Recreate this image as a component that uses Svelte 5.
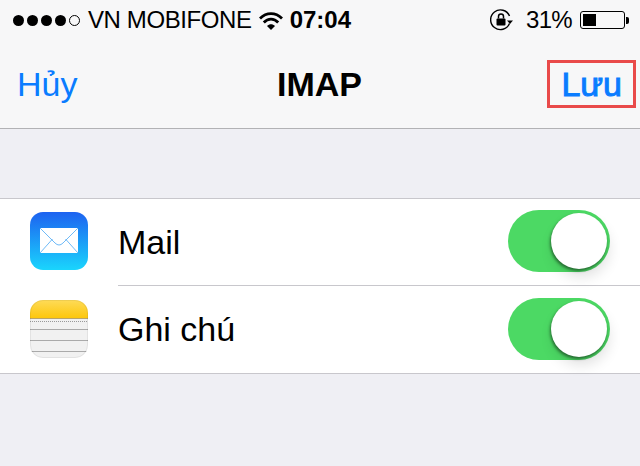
<script>
  const rows = [
    { name: 'Mail', icon: 'mail' },
    { name: 'Ghi chú', icon: 'notes' },
  ]
</script>

<div class="screen">
  <header class="top">
    <div class="status">
      <div class="status-left">
        <span class="dots">
          {#each [1, 2, 3, 4, 5] as n}
            <i class="dot" class:empty={n === 5}></i>
          {/each}
        </span>
        <span class="carrier">VN MOBIFONE</span>
        <svg class="wifi" width="24" height="19" viewBox="0 0 24 19">
          <path d="M1 7.500C7.500 1 16.500 1 23 7.500" fill="none" stroke="#000" stroke-width="2.800" />
          <path d="M4.800 11.500C9 7 15 7 19.200 11.500" fill="none" stroke="#000" stroke-width="2.800" />
          <path d="M8 15C10.500 12.800 13.500 12.800 16 15L12 19Z" fill="#000" />
        </svg>
        <span class="time">07:04</span>
      </div>
      <div class="status-right">
        <svg class="lock" width="24" height="22" viewBox="0 0 24 22">
          <path d="M19.500 14.500A9.800 9.800 0 1 1 19.500 7" fill="none" stroke="#000" stroke-width="1.400" />
          <path d="M17 11.500h6l-3 3.500z" fill="#000" />
          <rect x="6.500" y="9.500" width="9" height="7" rx="1" fill="#000" />
          <path d="M8.500 9.500V7.500a2.500 2.500 0 0 1 5 0v2" fill="none" stroke="#000" stroke-width="1.500" />
        </svg>
        <span class="pct">31%</span>
        <span class="battery"><i class="level"></i></span>
        <i class="nub"></i>
      </div>
    </div>
    <nav class="nav">
      <span class="cancel">Hủy</span>
      <span class="title">IMAP</span>
      <span class="save">Lưu</span>
    </nav>
  </header>

  <ul class="list">
    {#each rows as row, i}
      <li class="row">
        {#if row.icon === 'mail'}
          <svg class="app" width="58" height="58" viewBox="0 0 58 58">
            <defs>
              <linearGradient id="mailbg" x1="0" y1="0" x2="0" y2="1">
                <stop offset="0" stop-color="#1d62f0" />
                <stop offset="1" stop-color="#1ad5fd" />
              </linearGradient>
            </defs>
            <rect width="58" height="58" rx="13" fill="url(#mailbg)" />
            <rect x="10" y="16" width="38" height="25" fill="#fff" />
            <path d="M10 16L25 31Q29 35 33 31L48 16M10 41L22.500 27M48 41L35.500 27" fill="none" stroke="#4aa8f5" stroke-width="0.800" />
          </svg>
        {:else}
          <svg class="app" width="58" height="58" viewBox="0 0 58 58">
            <defs>
              <linearGradient id="notetop" x1="0" y1="0" x2="0" y2="1">
                <stop offset="0" stop-color="#fedb58" />
                <stop offset="1" stop-color="#fdc70c" />
              </linearGradient>
              <clipPath id="noteclip"><rect width="58" height="58" rx="13" /></clipPath>
            </defs>
            <g clip-path="url(#noteclip)">
              <rect width="58" height="58" fill="#f1f1f1" />
              <rect width="58" height="18" fill="url(#notetop)" />
              <path d="M0 18.500H58" stroke="#b9a468" />
              <path d="M0 21.500H58" stroke="#999" stroke-dasharray="1 1" />
              <path d="M0 29.500H58M0 40.500H58M0 51.500H58" stroke="#aaa" />
            </g>
            <rect x="0.500" y="0.500" width="57" height="57" rx="12.500" fill="none" stroke="#000" stroke-opacity="0.06" />
          </svg>
        {/if}
        <div class="row-body" class:last={i === rows.length - 1}>
          <span class="label">{row.name}</span>
          <span class="switch"><i class="knob"></i></span>
        </div>
      </li>
    {/each}
  </ul>
</div>

<style>
  :global(body) {
    margin: 0;
  }

  .screen {
    width: 640px;
    height: 466px;
    overflow: hidden;
    background: #efeff4;
    font-family: 'Liberation Sans', Arial, sans-serif;
    color: #000;
  }

  .top {
    height: 128px;
    background: #f7f7f8;
    border-bottom: 1px solid #b2b2b5;
  }

  .status {
    height: 40px;
    display: flex;
    justify-content: space-between;
    align-items: center;
    padding: 0 11px 0 13px;
    font-size: 24px;
  }

  .status-left,
  .status-right {
    display: flex;
    align-items: center;
  }

  .dots {
    display: flex;
    gap: 3px;
    margin-right: 8px;
  }

  .dot {
    width: 11px;
    height: 11px;
    border-radius: 50%;
    background: #000;
    box-sizing: border-box;
  }

  .dot.empty {
    background: none;
    border: 1px solid #000;
  }

  .carrier {
    letter-spacing: -0.4px;
  }

  .wifi {
    margin: 0 7px;
  }

  .time {
    font-weight: 700;
  }

  .lock {
    margin-right: 12px;
  }

  .pct {
    margin-right: 8px;
    letter-spacing: -0.7px;
  }

  .battery {
    width: 45px;
    height: 18px;
    padding: 2px;
    box-sizing: border-box;
    border: 1px solid #000;
    border-radius: 3px;
    display: flex;
  }

  .level {
    width: 13px;
    background: #000;
  }

  .nub {
    width: 3px;
    height: 7px;
    margin-left: 1px;
    background: #000;
    border-radius: 0 2px 2px 0;
  }

  .nav {
    height: 88px;
    display: grid;
    grid-template-columns: 1fr auto 1fr;
    align-items: center;
    padding: 0 4px;
    font-size: 34px;
  }

  .cancel,
  .save {
    color: #0a7cff;
  }

  .cancel {
    margin-left: 13px;
  }

  .title {
    font-weight: 700;
    margin-left: -1px;
  }

  .save {
    justify-self: end;
    font-size: 34px;
    -webkit-text-stroke: 1px #0a7cff;
    padding: 4px 11px;
    line-height: 34px;
    border: 3px solid #e94a4a;
  }

  .list {
    list-style: none;
    margin: 69px 0 0;
    padding: 0;
    background: #fff;
    border-top: 1px solid #c8c7cc;
    border-bottom: 1px solid #c8c7cc;
  }

  .row {
    height: 87px;
    display: flex;
    align-items: center;
    padding-left: 30px;
  }

  .row .app {
    margin-bottom: 2px;
  }

  .row:first-child .app {
    margin-bottom: 3px;
  }

  .switch {
    margin-bottom: 2px;
  }

  .app {
    flex: none;
    margin-right: 30px;
  }

  .row-body {
    flex: 1;
    height: 100%;
    display: flex;
    align-items: center;
    justify-content: space-between;
    padding-right: 30px;
    border-bottom: 1px solid #c8c7cc;
    box-sizing: border-box;
  }

  .row-body.last {
    border-bottom: 0;
  }

  .label {
    font-size: 34px;
  }

  .switch {
    width: 102px;
    height: 62px;
    border-radius: 31px;
    background: #4cd964;
    position: relative;
    display: block;
  }

  .knob {
    position: absolute;
    right: 3px;
    top: 3px;
    width: 56px;
    height: 56px;
    border-radius: 50%;
    background: #fff;
    box-shadow: -1px 2px 3px rgba(0, 0, 0, 0.45), 2px 8px 14px rgba(0, 0, 0, 0.12);
  }
</style>
